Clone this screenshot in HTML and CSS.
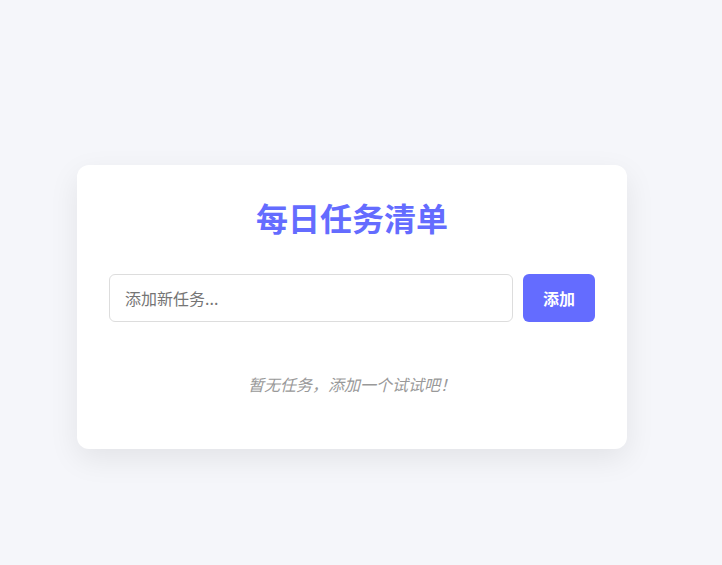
FILE: index.html
```html
<!DOCTYPE html>
<html lang="zh-CN">
<head>
<meta charset="utf-8">
<title>每日任务清单</title>
<link rel="stylesheet" href="styles.css">
</head>
<body>
  <main class="card">
    <h1 class="title">每日任务清单</h1>
    <form class="add-row" onsubmit="return false">
      <input class="task-input" type="text" placeholder="添加新任务...">
      <button class="add-btn" type="submit">添加</button>
    </form>
    <p class="empty">暂无任务，添加一个试试吧！</p>
  </main>
</body>
</html>
```
FILE: styles.css
```css
* { box-sizing: border-box; }
html, body { margin: 0; }
body {
  background: #f5f6fa;
  font-family: "Noto Sans CJK SC", "Noto Sans", sans-serif;
  padding: 165px 0 0 77px;
  min-height: 565px;
}
.card {
  width: 550px;
  background: #ffffff;
  border-radius: 12px;
  padding: 32px;
  box-shadow: 0 10px 30px rgba(0, 0, 0, 0.08);
}
.title {
  margin: 0 0 37px;
  text-align: center;
  font-size: 32px;
  line-height: 40px;
  font-weight: 700;
  color: #646cff;
}
.add-row {
  display: flex;
  gap: 10px;
  margin: 0;
}
.task-input {
  flex: 1;
  height: 48px;
  border: 1px solid #dddddd;
  border-radius: 6px;
  padding: 0 15px;
  font-family: inherit;
  font-size: 16px;
  color: #333;
  outline: none;
}
.task-input::placeholder { color: #757575; }
.add-btn {
  width: 72px;
  height: 48px;
  border: none;
  border-radius: 6px;
  background: #646cff;
  color: #fff;
  font-family: inherit;
  font-size: 16px;
  font-weight: 700;
}
.empty {
  margin: 51px 0 21px;
  text-align: center;
  font-style: italic;
  font-size: 16px;
  line-height: 23px;
  color: #999999;
}
```
